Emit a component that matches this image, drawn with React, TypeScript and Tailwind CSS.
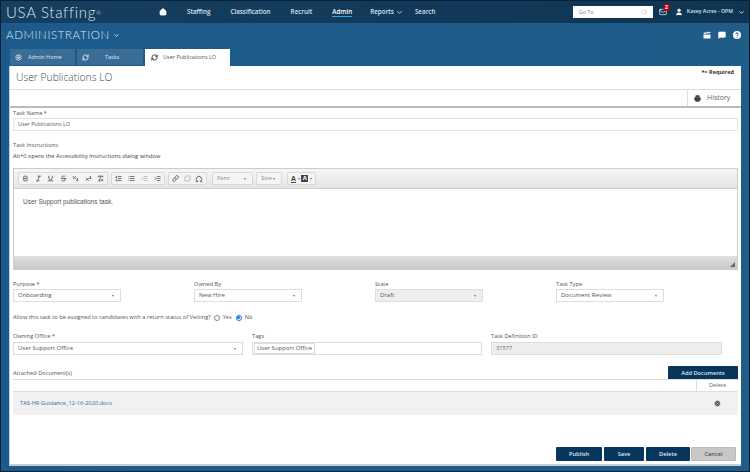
import React from 'react';
import {
  Home, ChevronDown, Settings, RefreshCw, Search, Mail, User, MessageSquare,
  Bold, Italic, Underline, Strikethrough, Subscript, Superscript, RemoveFormatting, ListOrdered, List,
  IndentDecrease, IndentIncrease, Link, Unlink, Omega, Printer, XCircle,
} from 'lucide-react';

const navItems = ['Staffing', 'Classification', 'Recruit', 'Admin'];

const Label = ({ text, required }: { text: string; required?: boolean }) => (
  <div className="text-[5.7px] leading-[9px] text-[#555] h-[9px]">
    {text} {required && <span className="text-[#c00]">*</span>}
  </div>
);

const Select = ({ value, disabled, className }: { value: string; disabled?: boolean; className?: string }) => (
  <div className={`h-[13px] flex items-center justify-between pl-1 pr-1.5 border border-[#ddd] text-[6px] text-[#555] ${disabled ? 'bg-[#eee]' : 'bg-white'} ${className ?? ''}`}>
    <span>{value}</span>
    <span className="w-0 h-0 border-x-[1.5px] border-x-transparent border-t-[2px] border-t-[#777]" />
  </div>
);

const Action = ({ text, grey }: { text: string; grey?: boolean }) => (
  <div className={`h-[14px] flex items-center justify-center rounded-[1px] text-[5.7px] font-semibold ${grey ? 'w-[45px] bg-[#c8c8c8] text-[#555] border border-[#bbb]' : 'bg-[#07355c] text-[#dfe8f0]'}`}>
    {text}
  </div>
);

const ToolGroup = ({ children, className }: { children: React.ReactNode; className?: string }) => (
  <div className={`h-[13px] flex items-center justify-between px-[3px] bg-[#f4f4f4] border border-[#d8d8d8] rounded-[2px] text-[#444] ${className ?? ''}`}>
    {children}
  </div>
);

const iconCls = 'w-[7px] h-[7px] stroke-[2.5]';

const Caret = () => <span className="w-0 h-0 border-x-[1.5px] border-x-transparent border-t-[2px] border-t-[#777]" />;

export default function App() {
  return (
    <div className="w-[750px] h-[472px] overflow-hidden flex flex-col bg-gradient-to-r from-[#1c5a8c] to-[#1f5c88] border border-[#0b2033]" style={{ fontFamily: '"Open Sans", "Liberation Sans", sans-serif' }}>
      <header className="h-[22px] shrink-0 flex items-center pl-[5px] pr-[4px] bg-gradient-to-r from-[#153e60] to-[#0f3554] text-[#d8e2ea]">
        <div className="w-[153px] text-[15px] leading-none font-light text-[#dbe5ed] tracking-[0.7px]" style={{ fontFamily: 'Lato, sans-serif' }}>
          USA Staffing<sup className="text-[6px]">®</sup>
        </div>
        <Home className="w-[8px] h-[8px] fill-white text-white mr-[20px]" />
        <nav className="flex items-center gap-[20px] text-[6.3px] font-semibold">
          {navItems.map(n => (
            <span key={n} className={n === 'Admin' ? 'border-b border-[#3fa0e0] text-white' : ''}>{n}</span>
          ))}
          <span className="-ml-[2px] flex items-center gap-[2px]">Reports <ChevronDown className="w-[7px] h-[7px] stroke-[3]" /></span>
          <span className="-ml-[8px]">Search</span>
        </nav>
        <div className="ml-auto w-[80px] h-[12px] bg-white flex items-center justify-between px-[6px] text-[5.5px] text-[#888]">
          Go To <Search className="w-[6px] h-[6px] text-[#bbb]" />
        </div>
        <div className="relative ml-[6px]">
          <Mail className="w-[8px] h-[8px] text-white" />
          <span className="absolute -top-[4px] left-[4px] w-[7px] h-[7px] rounded-full bg-[#c00010] text-white text-[5px] leading-[7px] text-center font-bold">2</span>
        </div>
        <User className="w-[8px] h-[8px] ml-[8px] fill-white text-white" />
        <span className="ml-[4px] text-[5.2px] font-semibold">Kasey Acres - OPM</span>
        <ChevronDown className="w-[7px] h-[7px] ml-[5px] stroke-[3]" />
      </header>

      <div className="h-[26px] shrink-0 flex items-center pl-[5px] pr-[8px] pb-[2px] text-[#dbe6ee]">
        <span className="text-[11.5px] font-light tracking-[0.6px]" style={{ fontFamily: 'Lato, sans-serif' }}>ADMINISTRATION</span>
        <ChevronDown className="w-[7px] h-[7px] ml-[3px] stroke-[3]" />
        <div className="ml-auto flex items-center gap-[7px] text-white">
          <svg viewBox="0 0 16 16" className="w-[8px] h-[8px]" fill="currentColor">
            <path d="M1 7h14v8H1z" />
            <path d="M1 5l3-3 2 2 3-3 2 2 3-2 1 3-14 2z" />
          </svg>
          <MessageSquare className="w-[8px] h-[8px] fill-white" />
          <svg viewBox="0 0 16 16" className="w-[8px] h-[8px]">
            <circle cx="8" cy="8" r="8" fill="#ffffff" />
            <path d="M5.5 6a2.5 2.5 0 1 1 3.5 2.3c-.7.3-1 .8-1 1.7" fill="none" stroke="#1f5c88" strokeWidth="2" />
            <circle cx="8" cy="12.5" r="1.2" fill="#1f5c88" />
          </svg>
        </div>
      </div>

      <div className="h-[17px] shrink-0 flex items-start gap-[2px] pl-[9px] text-[5.5px]">
        <div className="w-[65px] h-[16px] flex items-center gap-[6px] pl-[5px] bg-[#3a6c96] text-[#dfe8f0]">
          <Settings className="w-[7px] h-[7px] stroke-[3]" /> Admin Home
        </div>
        <div className="w-[66px] h-[16px] flex items-center pl-[5px] bg-[#3a6c96] text-[#dfe8f0]">
          <RefreshCw className="w-[7px] h-[7px] stroke-[3] mr-[16px]" /> Tasks
        </div>
        <div className="w-[85px] h-[17px] flex items-center gap-[5px] pl-[6px] bg-white text-[#555]">
          <RefreshCw className="w-[7px] h-[7px] stroke-[3] text-[#333]" /> User Publications LO
        </div>
      </div>

      <main className="ml-[8px] mr-[8px] h-[400px] shrink-0 bg-white flex flex-col border-b-2 border-l border-[#c9ced2]">
        <div className="h-[24px] shrink-0 flex justify-between border-b border-[#ddd] pl-[6px] pr-[7px]">
          <span className="text-[10.3px] font-light leading-[23px] text-[#444]">User Publications LO</span>
          <span className="text-[5.5px] font-bold text-[#333] mt-[2px]">*= Required</span>
        </div>
        <div className="h-[18px] shrink-0 flex justify-end border-b-2 border-[#bbb]">
          <div className="w-[54px] flex items-center gap-[6px] pl-[6px] border-l border-[#ddd] text-[7px] text-[#666]">
            <Printer className="w-[7px] h-[7px] fill-[#444] text-[#444]" /> History
          </div>
        </div>

        <div className="flex-1 flex flex-col pl-[3px] pr-[3px] pt-[1px]">
          <Label text="Task Name" required />
          <div className="h-[13px] flex items-center pl-1 border border-[#e4e4e4] text-[5.4px] text-[#555]">User Publications LO</div>

          <div className="mt-[10px] text-[5.7px] leading-[9px] text-[#555]">Task Instructions</div>
          <div className="mt-[2px] text-[5.7px] leading-[9px] text-[#444]">Alt+0 opens the Accessibility Instructions dialog window</div>

          <section className="mt-[7px] h-[102px] flex flex-col border border-[#ccc]">
            <div className="h-[20px] shrink-0 flex items-center pl-[4px] bg-gradient-to-b from-[#f6f6f6] to-[#e4e4e4] border-b border-[#d0d0d0]">
              <ToolGroup className="w-[90px]">
                <Bold className={iconCls} /><Italic className={iconCls} /><Underline className={iconCls} /><Strikethrough className={iconCls} />
                <Subscript className={iconCls} /><Superscript className={iconCls} /><RemoveFormatting className={iconCls} />
              </ToolGroup>
              <ToolGroup className="w-[54px] ml-[3px]">
                <ListOrdered className={iconCls} /><List className={iconCls} />
                <IndentDecrease className={`${iconCls} text-[#aaa]`} /><IndentIncrease className={iconCls} />
              </ToolGroup>
              <ToolGroup className="w-[39px] ml-[3px]">
                <Link className={iconCls} /><Unlink className={`${iconCls} text-[#aaa]`} /><Omega className="w-[8px] h-[8px] stroke-[2.5]" />
              </ToolGroup>
              <Select value="Font" className="w-[41px] ml-[5px] !bg-[#f4f4f4] !border-[#d8d8d8] !text-[#888] rounded-[2px]" />
              <Select value="Size" className="w-[26px] ml-[3px] !bg-[#f4f4f4] !border-[#d8d8d8] !text-[#888] rounded-[2px]" />
              <ToolGroup className="w-[29px] ml-[5px]">
                <span className="text-[7px] leading-[7px] font-bold border-b border-[#444]">A</span><Caret />
                <span className="w-[7px] h-[7px] bg-[#444] text-white text-[6px] leading-[7px] text-center font-bold">A</span><Caret />
              </ToolGroup>
            </div>
            <div className="flex-1 pl-[9px] pt-[8px] text-[6.5px] leading-[9px] text-[#555]" style={{ fontFamily: '"Liberation Sans", sans-serif' }}>User Support publications task.</div>
            <div className="h-[13px] shrink-0 flex items-end justify-end pr-[2px] pb-[2px] bg-gradient-to-b from-[#e0e0e0] to-[#c8c8c8]">
              <span className="w-[5px] h-[5px] bg-[#666] [clip-path:polygon(100%_0,100%_100%,0_100%)]" />
            </div>
          </section>

          <div className="mt-[10px] grid grid-cols-[181px_181px_181px_182px]">
            <div><Label text="Purpose" required /><Select value="Onboarding" className="w-[108px]" /></div>
            <div><Label text="Owned By" /><Select value="New Hire" className="w-[108px]" /></div>
            <div><Label text="State" /><Select value="Draft" disabled className="w-[108px]" /></div>
            <div><Label text="Task Type" /><Select value="Document Review" className="w-[108px]" /></div>
          </div>

          <div className="mt-[11px] h-[9px] flex items-center text-[5.7px] text-[#555]">
            Allow this task to be assigned to candidates with a return status of Vetting?
            <span className="ml-[3px] w-[6px] h-[6px] rounded-full border border-[#888]" />
            <span className="ml-[3px]">Yes</span>
            <span className="ml-[4px] w-[6px] h-[6px] rounded-full border border-[#1a73e8] flex items-center justify-center">
              <span className="w-[3px] h-[3px] rounded-full bg-[#1a73e8]" />
            </span>
            <span className="ml-[3px]">No</span>
          </div>

          <div className="mt-[10px] grid grid-cols-[230px_230px_231px] gap-x-[9px]">
            <div><Label text="Owning Office" required /><Select value="User Support Office" className="mt-[1px]" /></div>
            <div>
              <Label text="Tags" />
              <div className="h-[13px] mt-[1px] flex items-center pl-[1px] border border-[#ddd] text-[6px] text-[#555]">
                <span className="px-[2px] border border-[#ddd]">User Support Office</span>
              </div>
            </div>
            <div>
              <Label text="Task Definition ID" />
              <div className="h-[13px] mt-[1px] flex items-center pl-1 border border-[#ddd] bg-[#eee] text-[5.7px] text-[#666]">31577</div>
            </div>
          </div>

          <div className="mt-[11px] flex items-center justify-between">
            <Label text="Attached Document(s)" />
            <div className="w-[70px]"><Action text="Add Documents" /></div>
          </div>
          <div className="h-[13px] -mt-[1px] flex justify-end border-y border-[#ddd]">
            <div className="w-[42px] flex items-center justify-center border-l border-[#ddd] text-[5.7px] text-[#666]">Delete</div>
          </div>
          <div className="h-[23px] flex items-center justify-between bg-[#f1f1f1] pl-[7px] pr-[17px]">
            <span className="text-[5.7px] text-[#3f6695]">TAS-HR Guidance_12-16-2020.docx</span>
            <XCircle className="w-[7px] h-[7px] text-white fill-[#444]" />
          </div>

          <div className="mt-[32px] mr-[2px] flex justify-end gap-[2px]">
            <div className="w-[46px]"><Action text="Publish" /></div>
            <div className="w-[40px]"><Action text="Save" /></div>
            <div className="w-[44px] -mr-[1px]"><Action text="Delete" /></div>
            <Action text="Cancel" grey />
          </div>
        </div>
      </main>
    </div>
  );
}
